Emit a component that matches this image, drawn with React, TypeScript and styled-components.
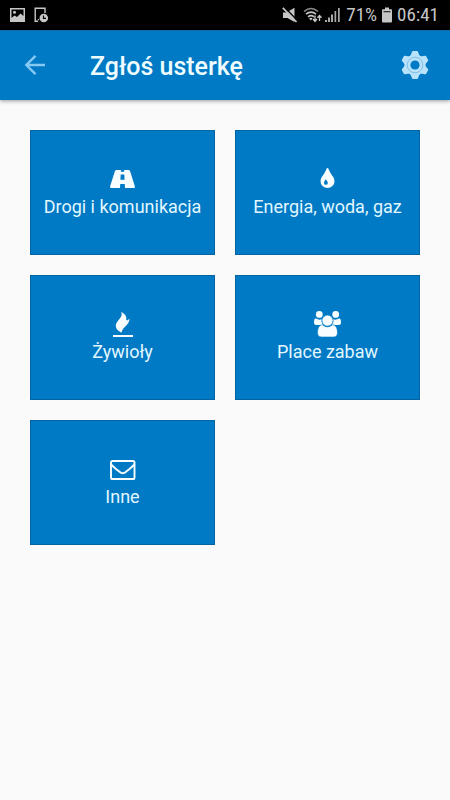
import React from "react";
import styled, { createGlobalStyle } from "styled-components";

const GlobalStyle = createGlobalStyle`
  * {
    box-sizing: border-box;
  }
  body {
    margin: 0;
    background: #fafafa;
    font-family: Roboto, "Noto Sans", sans-serif;
  }
`;

const Screen = styled.div`
  min-height: 100vh;
  background: #fafafa;
`;

const StatusBar = styled.div`
  display: flex;
  align-items: center;
  justify-content: space-between;
  height: 30px;
  padding: 0 11px 0 9px;
  background: #000;
  color: #c6c6c6;
  font-family: "Roboto Condensed", Roboto, sans-serif;
  font-size: 19px;
  line-height: 30px;
`;

const StatusGroup = styled.div<{ $gap: number }>`
  display: flex;
  align-items: center;
  gap: ${({ $gap }) => $gap}px;
`;

const AppBar = styled.header`
  display: flex;
  align-items: center;
  height: 70px;
  padding: 0 20px;
  background: #007ac5;
  border-top: 1px solid #146aa3;
  box-shadow: 0 1px 4px rgba(0, 0, 0, 0.4);
`;

const IconButton = styled.button`
  display: flex;
  align-items: center;
  justify-content: center;
  width: 30px;
  height: 30px;
  padding: 0;
  border: 0;
  background: transparent;
  cursor: pointer;
`;

const Title = styled.h1`
  flex: 1;
  margin: 0 0 0 40px;
  padding-top: 2px;
  color: #eefcff;
  font-size: 25px;
  font-weight: 500;
  line-height: 34px;
`;

const TileGrid = styled.main`
  display: grid;
  grid-template-columns: 1fr 1fr;
  gap: 20px;
  padding: 30px;
`;

const Tile = styled.button`
  display: flex;
  flex-direction: column;
  align-items: center;
  justify-content: center;
  height: 125px;
  padding: 1px 0 0;
  border: 1px solid #0464a3;
  background: #007ac5;
  color: #e2f7ff;
  font-family: inherit;
  font-size: 18px;
  line-height: 30px;
  white-space: nowrap;
  cursor: pointer;
`;

const TileIcon = styled.svg`
  width: 29px;
  height: 28px;
  overflow: visible;
  color: #f8feff;
`;

const PictureIcon = () => (
  <svg width="16" height="16" viewBox="0 0 16 16" aria-hidden="true">
    <path
      fill="#c6c6c6"
      fillRule="evenodd"
      d="M1 1H16V15H1ZM2.500 2.500V11L5.500 8.500L8 10L11.500 6.500L14.500 9V2.500Z"
    />
    <circle cx="5.500" cy="5.200" r="1.500" fill="#c6c6c6" />
  </svg>
);

const DeviceClockIcon = () => (
  <svg width="16" height="16" viewBox="0 0 16 16" aria-hidden="true">
    <path d="M5 14.300H2.200V1.200H12V6" fill="none" stroke="#c6c6c6" strokeWidth="1.400" />
    <circle cx="10.800" cy="11" r="4.300" fill="#c6c6c6" />
    <path d="M10.500 8.500V11.300H13" fill="none" stroke="#000" strokeWidth="1.200" />
    <path d="M4.800 12h1.200v1.200h-1.200z" fill="#c6c6c6" />
  </svg>
);

const MutedIcon = () => (
  <svg width="16" height="16" viewBox="0 0 16 16" aria-hidden="true">
    <path d="M1 5.500H4.500L12.500 0.800V15L5.500 11H1Z" fill="#c6c6c6" />
    <path d="M1.800 -0.300L16 14" stroke="#000" strokeWidth="1.500" />
    <path d="M0.800 0.900L14.500 15" stroke="#c6c6c6" strokeWidth="1.700" />
  </svg>
);

const WifiIcon = () => (
  <svg width="20" height="16" viewBox="0 0 20 16" aria-hidden="true">
    <g fill="none" stroke="#c6c6c6" strokeWidth="1.600">
      <path d="M1 4.500Q8 -1.500 15 4.500" stroke="#8a8a8a" />
      <path d="M3 7.200Q8 3 13 7.200" />
      <path d="M5 9.800Q8 7.500 11 9.800" />
    </g>
    <path d="M6 11.500Q8 10 9.500 11.500L8 13.500Z" fill="#c6c6c6" />
    <path
      d="M12 8.500V14M10 12L12 14.500L14 12M16.500 14V8.500M14.500 10.800L16.500 8.500L18.500 10.800"
      fill="none"
      stroke="#c6c6c6"
      strokeWidth="1.300"
    />
  </svg>
);

const SignalIcon = () => (
  <svg width="16" height="16" viewBox="0 0 16 16" aria-hidden="true">
    <g fill="#a8a8a8">
      <path d="M0 13h2v2h-2zM3 10.500h2v4.500h-2zM6 7.500h2v7.500h-2z" />
      <path d="M9.500 4h1.700v11h-1.700zM13 1h1.700v14h-1.700z" />
    </g>
  </svg>
);

const BatteryIcon = () => (
  <svg width="10" height="16" viewBox="0 0 10 16" aria-hidden="true">
    <path d="M3 0.500H7V2.300H9.200Q10 2.300 10 3V14.500Q10 15.500 9 15.500H1Q0 15.500 0 14.500V3Q0 2.300 0.800 2.300H3Z" fill="#c6c6c6" />
    <path d="M1.500 4h7v1.300h-7z" fill="#333" />
  </svg>
);

const BackArrow = () => (
  <svg width="24" height="24" viewBox="0 1 24 24" aria-hidden="true">
    <path d="M22 12H3.500M12.500 2.800L3.300 12L12.500 21.200" fill="none" stroke="#86c9f3" strokeWidth="2.400" />
  </svg>
);

const GEAR_TEETH = [0, 60, 120, 180, 240, 300];

const GearIcon = () => (
  <svg width="30" height="30" viewBox="-15 -14 30 30" aria-hidden="true">
    <g fill="#b9e2fb">
      <circle r="10.600" />
      {GEAR_TEETH.map((angle) => (
        <path
          key={angle}
          transform={`rotate(${angle})`}
          d="M-4.600 -9L-3 -13.200Q-2.700 -14 -1.900 -14H1.900Q2.700 -14 3 -13.200L4.600 -9Z"
        />
      ))}
    </g>
    <circle r="7.800" fill="none" stroke="#7fbfe8" strokeWidth="1" />
    <circle r="4.600" fill="#007ac5" />
  </svg>
);

const RoadIcon = () => (
  <TileIcon viewBox="0 0 29 28" aria-hidden="true">
    <path
      fill="currentColor"
      fillRule="evenodd"
      d="M8.600 6H12.900L12.800 7.800H16.200L16.100 6H20.400Q21.600 6 22.100 7.200L26.800 22Q27.500 24 26 24H17L16.800 20H12.200L12 24H3Q1.500 24 2.200 22L6.900 7.200Q7.400 6 8.600 6ZM12.700 10.500L12.400 15.800H16.600L16.300 10.500Z"
    />
  </TileIcon>
);

const DropIcon = () => (
  <TileIcon viewBox="0 0 29 28" aria-hidden="true">
    <path
      fill="currentColor"
      fillRule="evenodd"
      d="M14.500 4C15.600 4 15.500 5.600 17.500 9C19.500 12.200 21.500 14 21.500 17.200A7 6.900 0 0 1 7.500 17.200C7.500 14 9.500 12.200 11.500 9C13.500 5.600 13.400 4 14.500 4ZM12.800 15C12.500 16.400 11 17.200 11 18.900A1.900 1.900 0 0 0 14.800 18.900C14.800 17.200 13.200 16.400 12.800 15Z"
    />
  </TileIcon>
);

const FlameIcon = () => (
  <TileIcon viewBox="0 0 29 28" aria-hidden="true">
    <path
      fill="currentColor"
      d="M13.200 3C14.300 6 13.500 7.700 11 10.500C8.600 13.200 7.500 15.100 7.900 17.700C8.300 20.700 11 22 13.400 23.800C14 21.800 14.300 20.400 17 17.700C20 14.800 21.600 13 21.500 9.300C20.500 11.200 19.400 11.600 18.200 11.200C18.900 7.400 17 4.700 13.200 3Z"
    />
    <path fill="currentColor" d="M5 26h20v2h-20z" />
  </TileIcon>
);

const PeopleIcon = () => (
  <TileIcon viewBox="0 0 29 28" aria-hidden="true">
    <g fill="currentColor">
      <circle cx="6.300" cy="5.400" r="3.400" />
      <circle cx="22.700" cy="5.400" r="3.400" />
      <path d="M3 9.500Q6.300 11.500 8.800 10Q8.300 13.500 10 16H3.500Q1 16 1 13.500Q1 9 3 9.500Z" />
      <path d="M26 9.500Q22.700 11.500 20.200 10Q20.700 13.500 19 16H25.500Q28 16 28 13.500Q28 9 26 9.500Z" />
      <path
        stroke="#007ac5"
        strokeWidth="0.600"
        d="M9.300 15.800Q14.500 20 19.700 15.800C23 15.800 24.500 19.500 24.500 24Q24.500 28 20.800 28H8.200Q4.500 28 4.500 24C4.500 19.500 6 15.800 9.300 15.800Z"
      />
      <circle cx="14.500" cy="11.600" r="5.600" stroke="#007ac5" strokeWidth="0.800" />
    </g>
  </TileIcon>
);

const EnvelopeIcon = () => (
  <TileIcon viewBox="0 0 29 28" aria-hidden="true">
    <g fill="none" stroke="currentColor" strokeWidth="1.900">
      <rect x="3" y="7" width="23.500" height="18" rx="1.600" />
      <path d="M3 10C4.500 12.500 8 14.800 11.500 17.800Q14.700 20.800 18 17.800C21.500 14.800 25 12.500 26.500 10" />
    </g>
  </TileIcon>
);

const categories = [
  { label: "Drogi i komunikacja", Icon: RoadIcon },
  { label: "Energia, woda, gaz", Icon: DropIcon },
  { label: "Żywioły", Icon: FlameIcon },
  { label: "Place zabaw", Icon: PeopleIcon },
  { label: "Inne", Icon: EnvelopeIcon },
];

export default function App() {
  return (
    <Screen>
      <GlobalStyle />
      <StatusBar>
        <StatusGroup $gap={8}>
          <PictureIcon />
          <DeviceClockIcon />
        </StatusGroup>
        <StatusGroup $gap={5}>
          <MutedIcon />
          <StatusGroup $gap={2}>
            <WifiIcon />
            <SignalIcon />
          </StatusGroup>
          <span>71%</span>
          <BatteryIcon />
          <span>06:41</span>
        </StatusGroup>
      </StatusBar>
      <AppBar>
        <IconButton type="button" aria-label="Wstecz">
          <BackArrow />
        </IconButton>
        <Title>Zgłoś usterkę</Title>
        <IconButton type="button" aria-label="Ustawienia">
          <GearIcon />
        </IconButton>
      </AppBar>
      <TileGrid>
        {categories.map(({ label, Icon }) => (
          <Tile key={label} type="button">
            <Icon />
            <span>{label}</span>
          </Tile>
        ))}
      </TileGrid>
    </Screen>
  );
}
